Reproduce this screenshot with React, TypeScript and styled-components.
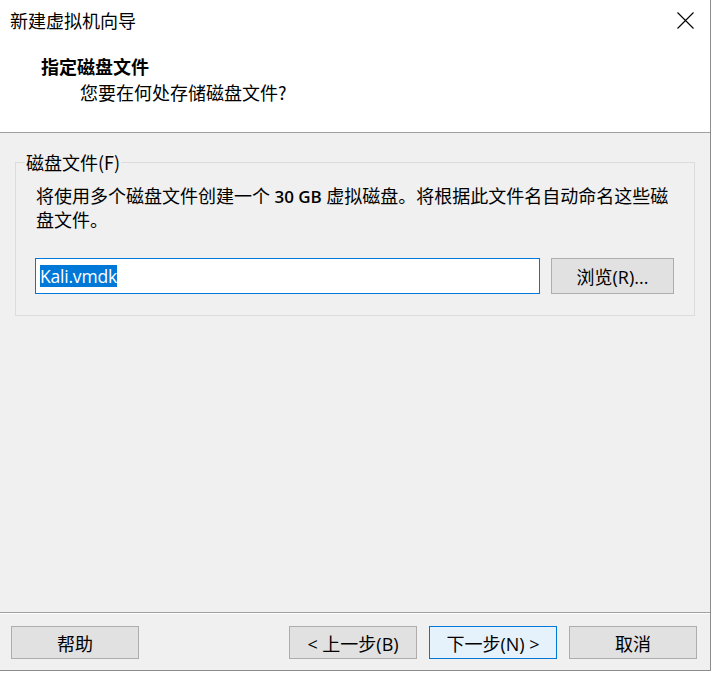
import React from "react";
import styled, { createGlobalStyle } from "styled-components";

const Global = createGlobalStyle`
  html, body { margin: 0; padding: 0; background: #ffffff; }
  body {
    font-family: "Open Sans", "Noto Sans CJK SC", sans-serif;
    font-size: 18px;
    color: #000;
  }
`;

const Window = styled.div`
  width: 710px;
  height: 670px;
  border-right: 1px solid #8c8c8c;
  border-bottom: 1px solid #8c8c8c;
  background: #f0f0f0;
  display: flex;
  flex-direction: column;
`;

const Header = styled.div`
  height: 132px;
  background: #ffffff;
  border-bottom: 1px solid #a0a0a0;
  display: flex;
  flex-direction: column;
`;

const TitleBar = styled.div`
  height: 40px;
  display: flex;
  align-items: center;
  justify-content: space-between;
  padding: 0 16px 0 10px;
`;

const Title = styled.div`
  font-family: "Noto Sans CJK SC", sans-serif;
  font-size: 18px;
  line-height: 24px;
`;

const CloseIcon = styled.svg`
  width: 17px;
  height: 17px;
  display: block;
`;

const Heading = styled.div`
  font-family: "Noto Sans CJK SC", sans-serif;
  font-weight: 700;
  font-size: 18px;
  line-height: 26px;
  margin: 13px 0 0 41px;
`;

const SubHeading = styled.div`
  font-family: "Noto Sans CJK SC", sans-serif;
  font-size: 18px;
  line-height: 24px;
  margin: 1px 0 0 80px;
`;

const Body = styled.div`
  flex: 1;
  padding: 19px 15px 0 15px;
`;

const Group = styled.fieldset`
  margin: 0;
  border: 1px solid #dcdcdc;
  padding: 0 14px 21px 19px;
  min-width: 0;
`;

const Legend = styled.legend`
  margin-left: -10px;
  padding: 0 1px;
  font-family: "Noto Sans CJK SC", sans-serif;
  font-size: 18px;
  line-height: 20px;
`;

const Description = styled.p`
  margin: 12px 0 0 0;
  padding-left: 1px;
  font-family: "Noto Sans CJK SC", sans-serif;
  font-size: 18px;
  line-height: 23px;
  color: #000;
`;

const Latin = styled.span`
  font-family: "Open Sans", sans-serif;
  font-weight: 600;
  font-size: 17px;
`;

const InputRow = styled.div`
  margin-top: 27px;
  display: flex;
  gap: 11px;
`;

const FileField = styled.div`
  width: 505px;
  height: 36px;
  box-sizing: border-box;
  border: 1px solid #0078d7;
  background: #ffffff;
  display: flex;
  align-items: center;
  padding-left: 4px;
`;

const Selected = styled.span`
  background: #0078d7;
  color: #ffffff;
  font-family: "Open Sans", sans-serif;
  font-size: 17.5px;
  line-height: 22px;
  height: 22px;
  display: inline-block;
  letter-spacing: -0.2px;
`;

const Button = styled.button<{ $primary?: boolean; $w?: number }>`
  width: ${(p) => p.$w ?? 128}px;
  height: 33px;
  box-sizing: border-box;
  border: 1px solid ${(p) => (p.$primary ? "#0078d7" : "#adadad")};
  background: ${(p) => (p.$primary ? "#e5f1fb" : "#e1e1e1")};
  font-family: "Open Sans", "Noto Sans CJK SC", sans-serif;
  font-size: 18px;
  color: #000;
  padding: 0;
  display: flex;
  align-items: center;
  justify-content: center;
  cursor: default;
`;

const BrowseButton = styled(Button)`
  height: 36px;
`;

const Footer = styled.div`
  border-top: 1px solid #a0a0a0;
  box-shadow: inset 0 1px 0 #ffffff;
  padding: 13px 13px 11px 11px;
  display: flex;
  align-items: center;
`;

const Spacer = styled.div`
  flex: 1;
`;

const NavGroup = styled.div`
  display: flex;
  gap: 12px;
`;

export default function App() {
  return (
    <>
      <Global />
      <Window>
        <Header>
          <TitleBar>
            <Title>新建虚拟机向导</Title>
            <CloseIcon viewBox="0 0 17 17">
              <path d="M0.5 0.5 L16.5 16.5 M16.5 0.5 L0.5 16.5" stroke="#000" strokeWidth="1.1" fill="none" />
            </CloseIcon>
          </TitleBar>
          <Heading>指定磁盘文件</Heading>
          <SubHeading>您要在何处存储磁盘文件?</SubHeading>
        </Header>
        <Body>
          <Group>
            <Legend>磁盘文件(F)</Legend>
            <Description>
              将使用多个磁盘文件创建一个<Latin> 30 GB </Latin>虚拟磁盘。将根据此文件名自动命名这些磁
              <br />
              盘文件。
            </Description>
            <InputRow>
              <FileField>
                <Selected>Kali.vmdk</Selected>
              </FileField>
              <BrowseButton $w={123}>浏览(R)...</BrowseButton>
            </InputRow>
          </Group>
        </Body>
        <Footer>
          <Button>帮助</Button>
          <Spacer />
          <NavGroup>
            <Button>&lt; 上一步(B)</Button>
            <Button $primary>下一步(N) &gt;</Button>
            <Button>取消</Button>
          </NavGroup>
        </Footer>
      </Window>
    </>
  );
}
